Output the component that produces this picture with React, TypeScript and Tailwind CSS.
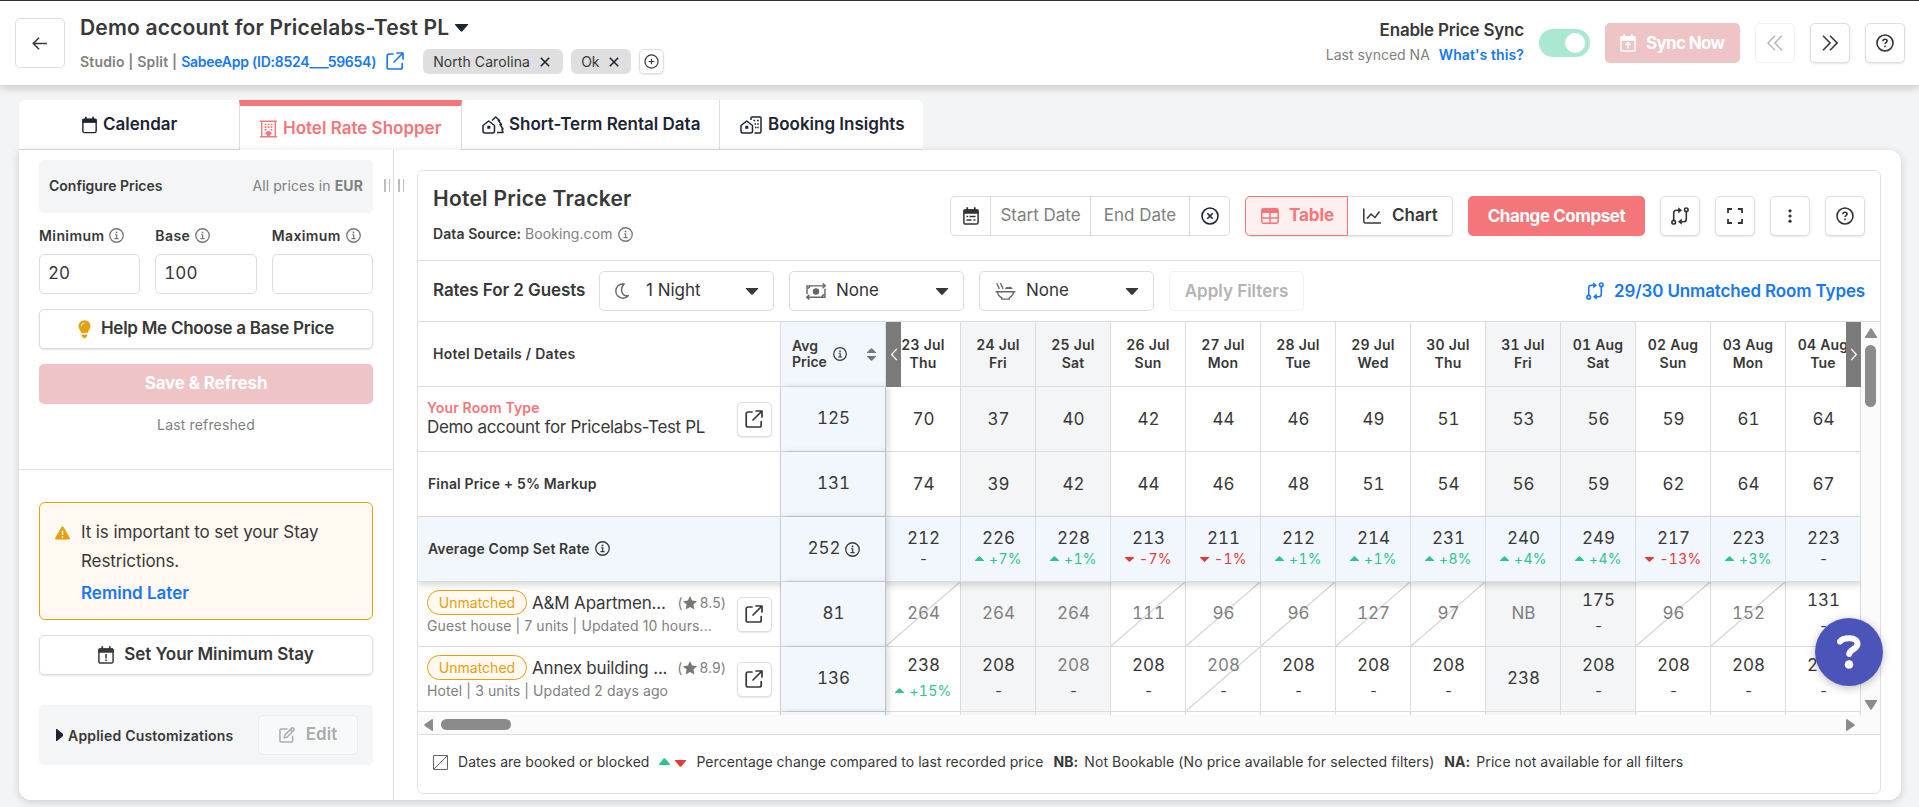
import type { ReactNode } from 'react';

type IconProps = { className?: string };

type Cell = {
  value: string;
  change?: string;
  muted?: boolean;
  booked?: boolean;
};

const dates = [
  { day: '23 Jul', week: 'Thu' },
  { day: '24 Jul', week: 'Fri', weekend: true },
  { day: '25 Jul', week: 'Sat', weekend: true },
  { day: '26 Jul', week: 'Sun' },
  { day: '27 Jul', week: 'Mon' },
  { day: '28 Jul', week: 'Tue' },
  { day: '29 Jul', week: 'Wed' },
  { day: '30 Jul', week: 'Thu' },
  { day: '31 Jul', week: 'Fri', weekend: true },
  { day: '01 Aug', week: 'Sat', weekend: true },
  { day: '02 Aug', week: 'Sun' },
  { day: '03 Aug', week: 'Mon' },
  { day: '04 Aug', week: 'Tue' },
];

const roomPrices = ['70', '37', '40', '42', '44', '46', '49', '51', '53', '56', '59', '61', '64'];
const finalPrices = ['74', '39', '42', '44', '46', '48', '51', '54', '56', '59', '62', '64', '67'];

const compSet: Cell[] = [
  { value: '212', change: '-' },
  { value: '226', change: '+7%' },
  { value: '228', change: '+1%' },
  { value: '213', change: '-7%' },
  { value: '211', change: '-1%' },
  { value: '212', change: '+1%' },
  { value: '214', change: '+1%' },
  { value: '231', change: '+8%' },
  { value: '240', change: '+4%' },
  { value: '249', change: '+4%' },
  { value: '217', change: '-13%' },
  { value: '223', change: '+3%' },
  { value: '223', change: '-' },
];

const hotels: { name: string; rating: string; info: string; avg: string; cells: Cell[] }[] = [
  {
    name: 'A&M Apartmen...',
    rating: '8.5',
    info: 'Guest house | 7 units | Updated 10 hours...',
    avg: '81',
    cells: [
      { value: '264', booked: true, muted: true },
      { value: '264', muted: true },
      { value: '264', muted: true },
      { value: '111', booked: true, muted: true },
      { value: '96', booked: true, muted: true },
      { value: '96', booked: true, muted: true },
      { value: '127', booked: true, muted: true },
      { value: '97', booked: true, muted: true },
      { value: 'NB', muted: true },
      { value: '175', change: '-' },
      { value: '96', booked: true, muted: true },
      { value: '152', booked: true, muted: true },
      { value: '131', change: '-' },
    ],
  },
  {
    name: 'Annex building ...',
    rating: '8.9',
    info: 'Hotel | 3 units | Updated 2 days ago',
    avg: '136',
    cells: [
      { value: '238', change: '+15%' },
      { value: '208', change: '-' },
      { value: '208', change: '-', muted: true },
      { value: '208', change: '-' },
      { value: '208', change: '-', booked: true, muted: true },
      { value: '208', change: '-' },
      { value: '208', change: '-' },
      { value: '208', change: '-' },
      { value: '238' },
      { value: '208', change: '-' },
      { value: '208', change: '-' },
      { value: '208', change: '-' },
      { value: '208', change: '-' },
    ],
  },
];

/* ---------- icons ---------- */

function InfoIcon({ className }: IconProps) {
  return (
    <svg viewBox="0 0 16 16" className={className} fill="none" stroke="currentColor">
      <circle cx="8" cy="8" r="7.2" strokeWidth="1.4" />
      <path d="M6.5 7.2h1.700v4M5.800 11.400h4.400" strokeWidth="1.300" />
      <circle cx="8" cy="4.700" r="1" fill="currentColor" stroke="none" />
    </svg>
  );
}

function HelpIcon({ className }: IconProps) {
  return (
    <svg viewBox="0 0 18 18" className={className} fill="none" stroke="currentColor" strokeWidth="1.6">
      <circle cx="9" cy="9" r="8" />
      <path d="M6.9 7.2c0-1.2 1-1.9 2.1-1.9s2.1.7 2.1 1.8c0 1.4-2.1 1.5-2.1 3" />
      <path d="M9 11.5v1.7" />
    </svg>
  );
}

function ExternalIcon({ className }: IconProps) {
  return (
    <svg viewBox="0 0 18 18" className={className} fill="none" stroke="currentColor" strokeWidth="1.7" strokeLinecap="round" strokeLinejoin="round">
      <path d="M7 2H3a1.8 1.8 0 0 0-1.8 1.8v11.4A1.8 1.8 0 0 0 3 17h11.4a1.8 1.8 0 0 0 1.8-1.8V11.500" />
      <path d="M11 1h6v6M16.500 1.500 8 10" />
    </svg>
  );
}

function CalendarIcon({ className, children }: IconProps & { children?: ReactNode }) {
  return (
    <svg viewBox="0 0 16 18" className={className} fill="none" stroke="currentColor">
      <rect x=".9" y="2.900" width="14.200" height="14.200" rx="1.700" strokeWidth="1.500" />
      <path d="M.9 2.900h14.200v3.300H.9z" fill="currentColor" />
      <path d="M4.200.3v3M11.800.3v3" strokeWidth="1.800" />
      {children}
    </svg>
  );
}

function HotelIcon({ className }: IconProps) {
  return (
    <svg viewBox="0 0 18 18" className={className} fill="none" stroke="currentColor">
      <path d="M0 .8h18M0 17.200h18M1.800 1v16M16.200 1v16" strokeWidth="1.500" />
      <path d="M4.800 4.200h2M8 4.200h2M11.200 4.200h2M4.800 7h2M8 7h2M11.200 7h2M4.800 9.800h2M11.200 9.800h2" strokeWidth="1.700" />
      <path d="M7.500 17v-2.300H5.500c0-2 1.500-3.500 3.500-3.500s3.500 1.500 3.500 3.500h-2V17z" fill="currentColor" stroke="none" />
    </svg>
  );
}

function RentalIcon({ className }: IconProps) {
  return (
    <svg viewBox="0 0 22 18" className={className} fill="none" stroke="currentColor" strokeWidth="1.500" strokeLinejoin="round">
      <path d="M1 9.500 6.700 5l5.800 4.500V15a2 2 0 0 1-2 2H3a2 2 0 0 1-2-2z" />
      <rect x="5.300" y="9.800" width="3" height="3" fill="currentColor" stroke="none" />
      <path d="M10 4.500 13.700 1l3.800 3.500h-1.200l3.200 4H18l3 4.500-1 .3 1 3.200h-6" />
    </svg>
  );
}

function InsightsIcon({ className }: IconProps) {
  return (
    <svg viewBox="0 0 22 18" className={className} fill="none" stroke="currentColor" strokeWidth="1.500" strokeLinejoin="round">
      <path d="M1 9.500 6.700 5l5.800 4.500V15a2 2 0 0 1-2 2H3a2 2 0 0 1-2-2z" />
      <rect x="5.300" y="9.800" width="3" height="3" fill="currentColor" stroke="none" />
      <path d="M11 4V2q0-1 1-1h8q1 0 1 1v13.500c0 1-.5 1.500-1.500 1.500H14.500" />
      <path d="M13.500 4.500h1.700M17 4.500h1.700M14.500 8h1.500M17.200 8h1.500M15 11.500h1.500M17.200 11.500h1.500" />
    </svg>
  );
}

function CompareIcon({ className }: IconProps) {
  return (
    <svg viewBox="0 0 18 18" className={className} fill="none" stroke="currentColor" strokeWidth="1.600">
      <circle cx="2.700" cy="15.200" r="1.800" />
      <circle cx="15.300" cy="2.800" r="1.800" />
      <path d="M2.700 13.200V6c0-1.800 1-2.700 2.600-2.700H8M15.300 4.800V12c0 1.800-1 2.700-2.600 2.700H10" />
      <path d="M7.200.2 11 3.300 7.200 6.400zM10.800 11.600 7 14.700l3.800 3.100z" fill="currentColor" stroke="none" />
    </svg>
  );
}

function MoneyIcon({ className }: IconProps) {
  return (
    <svg viewBox="0 0 22 18" className={className} fill="none" stroke="currentColor" strokeWidth="1.500">
      <path d="M1.500 12V3h19M18 .5 20.800 3 18 5.500M20.500 6v9h-19M4 12.500 1.200 15 4 17.500" />
      <circle cx="11" cy="9" r="3.400" fill="currentColor" stroke="none" />
      <path d="M2 5.500q2.500 0 2.500-2.500M20 12.500q-2.500 0-2.500 2.500" />
    </svg>
  );
}

function MealIcon({ className }: IconProps) {
  return (
    <svg viewBox="0 0 22 19" className={className} fill="none" stroke="currentColor" strokeWidth="1.400">
      <path d="M.5 10.300h21M2.500 10.500c.4 3 2 5 4.500 6v1.500h8v-1.500c2.500-1 4.100-3 4.500-6" />
      <path d="M2 1c0 3 2 3 2.300 6.500M6 1c0 3 2 3 2.300 6.500" />
      <path d="M10.500 7.500c.5-2 2-2.500 3.500-2 1.800-1 4 0 4.500 2z" fill="currentColor" stroke="none" />
    </svg>
  );
}

function Up({ className }: IconProps) {
  return (
    <svg viewBox="0 0 10 6" className={className} fill="currentColor" preserveAspectRatio="none">
      <path d="M.4 6a.4.4 0 0 1-.3-.8L4.300.5a1 1 0 0 1 1.400 0l4.200 4.700a.4.400 0 0 1-.3.8z" />
    </svg>
  );
}

function Down({ className }: IconProps) {
  return (
    <svg viewBox="0 0 10 6" className={className} fill="currentColor" preserveAspectRatio="none">
      <path d="M.4 0a.4.400 0 0 0-.3.800l4.200 4.700a1 1 0 0 0 1.400 0L9.900.8A.4.400 0 0 0 9.600 0z" />
    </svg>
  );
}

/* ---------- small parts ---------- */

function IconButton({ children, faded }: { children: ReactNode; faded?: boolean }) {
  return (
    <button
      className={`flex size-10 shrink-0 items-center justify-center rounded-[5px] border bg-white ${
        faded ? 'border-[#f0f0f0] text-[#b3b3b3]' : 'border-[#dedede] text-[#333] shadow-[0_1px_2px_rgba(0,0,0,0.1)]'
      }`}
    >
      {children}
    </button>
  );
}

function PriceField({ label, value }: { label: string; value: string }) {
  return (
    <div className="flex-1">
      <div className="flex h-[18px] items-center gap-[5px] pb-[1px] text-[14px] font-semibold tracking-[0.4px]">
        {label}
        <InfoIcon className="size-[15px] text-[#777]" />
      </div>
      <div className="mt-[9px] flex h-10 items-center rounded-[5px] border border-[#dcdcdc] px-2 text-[17px] tabular-nums">{value}</div>
    </div>
  );
}

function Select({ icon, label }: { icon: ReactNode; label: string }) {
  return (
    <div className="mr-[15px] flex h-10 w-[175px] items-center rounded-[5px] border border-[#dcdcdc] pr-[15px] pl-[15px]">
      <span className="flex w-[31px] items-center text-[#666]">{icon}</span>
      <span className="flex-1 text-[17px] text-[#333]">{label}</span>
      <Down className="h-[7px] w-3" />
    </div>
  );
}

function Change({ text }: { text: string }) {
  if (text === '-') return <span className="text-[14px] leading-[18px]">-</span>;
  const down = text.startsWith('-');
  return (
    <span className={`flex items-center gap-[5px] text-[14px] leading-[18px] tracking-[0.3px] ${down ? 'text-[#e53935]' : 'text-[#2dc48d]'}`}>
      {down ? <Down className="h-[5px] w-[9px]" /> : <Up className="mb-[2px] h-[5px] w-[9px]" />}
      {text}
    </span>
  );
}

function DateCell({ cell, weekend, tint, single }: { cell: Cell; weekend?: boolean; tint?: boolean; single?: boolean }) {
  const spacing = tint ? 'pb-[3px]' : single ? 'pb-[1px]' : cell.change ? 'pb-[4px]' : 'pb-[2px]';
  const gap = !cell.change ? '' : tint ? 'mb-[1px]' : 'mb-[6px]';
  return (
    <div
      className={`relative flex w-[75px] shrink-0 flex-col items-center justify-center border-r border-[#dcdcdc] pl-[1px] tabular-nums ${spacing} ${
        tint ? 'bg-[#f2f7fe]' : weekend ? 'bg-[#f3f5f7]' : 'bg-white'
      }`}
    >
      {cell.booked && (
        <svg viewBox="0 0 75 64" className="absolute inset-0 h-full w-full" preserveAspectRatio="none">
          <path d="M0 64 75 0" stroke="#d4d4d4" strokeWidth="1.300" />
        </svg>
      )}
      <span className={`relative text-[17px] leading-[22px] ${cell.muted ? 'text-[#808080]' : ''} ${gap}`}>{cell.value}</span>
      {cell.change && <Change text={cell.change} />}
    </div>
  );
}

type RowProps = { title: ReactNode; avg: string; cells: Cell[]; tint?: boolean; infoAvg?: boolean; single?: boolean };

function Row({ title, avg, cells, tint, infoAvg, single }: RowProps) {
  return (
    <div className={`flex h-[65px] shrink-0 border-b border-[#dcdcdc] ${tint ? 'relative z-10 bg-[#f2f7fe] shadow-[0_3px_7px_rgba(0,0,0,0.16)]' : ''}`}>
      <div className="flex w-[363px] shrink-0 items-center border-r border-[#d0d0d0]">{title}</div>
      <div className="relative z-10 flex w-[105px] shrink-0 items-center justify-center gap-1 border-r border-[#c0c0c0] bg-[#f2f7fe] pl-[1px] text-[17px] tabular-nums shadow-[3px_0_6px_rgba(0,0,0,0.13)]">
        {avg}
        {infoAvg && <InfoIcon className="size-[15px]" />}
      </div>
      {cells.map((cell, i) => (
        <DateCell key={i} cell={cell} weekend={dates[i].weekend} tint={tint} single={single} />
      ))}
    </div>
  );
}

function ExternalButton() {
  return (
    <button className="mr-2 flex size-[35px] shrink-0 items-center justify-center rounded-[5px] border border-[#dedede] bg-white pr-[2px] pb-[1px] shadow-[0_1px_2px_rgba(0,0,0,0.1)]">
      <ExternalIcon className="size-[18px]" />
    </button>
  );
}

/* ---------- sections ---------- */

function Header() {
  return (
    <header className="relative z-20 flex h-[85px] shrink-0 items-start border-t border-[#333] bg-white pr-[14px] pl-[15px] shadow-[0_3px_8px_rgba(0,0,0,0.18)]">
      <button className="mt-[17px] flex h-[50px] w-[50px] items-center justify-center rounded-[5px] border border-[#dedede] pr-[2px]">
        <svg viewBox="0 0 16 14" className="h-[13px] w-[15px]" fill="none" stroke="currentColor" strokeWidth="1.700">
          <path d="M16 7H1.500M7.500.8 1.300 7l6.200 6.200" />
        </svg>
      </button>
      <div className="ml-[15px]">
        <div className="mt-3 flex h-[30px] items-center gap-[6px] text-[21px] font-semibold tracking-[0.18px] whitespace-nowrap">
          Demo account for Pricelabs-Test PL
          <Down className="h-[8px] w-[13px] text-[#1d2433]" />
        </div>
        <div className="mt-[5px] flex h-[26px] items-center text-[14px] whitespace-nowrap">
          <span className="mr-1 font-semibold tracking-[0.18px] text-[#808080]">Studio | Split |</span>
          <span className="font-semibold tracking-[-0.26px] text-[#1877f2]">SabeeApp (ID:8524___59654)</span>
          <ExternalIcon className="mr-[19px] ml-[10px] size-[18px] text-[#1877f2]" />
          <span className="mr-2 flex h-[25px] w-[140px] items-center gap-[10px] rounded-[6px] bg-[#dfdfdf] pl-[10px] tracking-[0.08px]">
            North Carolina
            <Cross />
          </span>
          <span className="mr-2 flex h-[25px] w-[60px] items-center gap-[9px] rounded-[6px] bg-[#dfdfdf] pl-[10px]">
            Ok
            <Cross />
          </span>
          <span className="flex size-[25px] items-center justify-center rounded-[5px] border border-[#dedede] shadow-[0_1px_2px_rgba(0,0,0,0.1)]">
            <svg viewBox="0 0 16 16" className="size-[15px]" fill="none" stroke="currentColor" strokeWidth="1.300">
              <circle cx="8" cy="8" r="7" />
              <path d="M8 5v6M5 8h6" />
            </svg>
          </span>
        </div>
      </div>
      <div className="mt-[17px] ml-auto text-right">
        <div className="text-[17px] leading-6 font-semibold tracking-[-0.2px]">Enable Price Sync</div>
        <div className="mt-[3px] text-[14px] leading-5 text-[#808080]">
          Last synced NA <span className="ml-[5px] font-semibold tracking-[0.1px] text-[#1877f2]">What's this?</span>
        </div>
      </div>
      <div className="mt-[28px] ml-[15px] flex h-7 w-[51px] items-center justify-end rounded-full bg-[#abe8d1] pr-[5px]">
        <div className="size-5 rounded-full bg-white" />
      </div>
      <div className="mt-[22px] flex items-center gap-[15px] pl-[15px]">
        <button className="flex h-10 w-[135px] items-center gap-[10px] rounded-[5px] bg-[#efc4c6] pl-[15px] text-[17px] font-bold tracking-[-0.65px] text-white">
          <CalendarIcon className="h-[18px] w-4">
            <path d="M8 14.500V9M5.500 11 8 8.500 10.500 11" strokeWidth="1.500" />
          </CalendarIcon>
          <span className="pt-[2px]">Sync Now</span>
        </button>
        <IconButton faded>
          <svg viewBox="0 0 16 16" className="size-4" fill="none" stroke="currentColor" strokeWidth="1.400">
            <path d="M8 .8.900 8 8 15.200M15 .8 7.900 8 15 15.200" />
          </svg>
        </IconButton>
        <IconButton>
          <svg viewBox="0 0 16 16" className="size-4" fill="none" stroke="currentColor" strokeWidth="1.500">
            <path d="M1 .8 8.100 8 1 15.200M8 .8 15.100 8 8 15.200" />
          </svg>
        </IconButton>
        <IconButton>
          <HelpIcon className="size-[18px]" />
        </IconButton>
      </div>
    </header>
  );
}

function Cross() {
  return (
    <svg viewBox="0 0 10 10" className="mt-[2px] size-[10px]" fill="none" stroke="#1d2433" strokeWidth="1.600">
      <path d="m.8.800 8.400 8.400M9.200.8.800 9.200" />
    </svg>
  );
}

function Tabs() {
  const tab = 'flex h-[50px] items-center border-b border-[#dedede] bg-white';
  return (
    <nav className="mt-[15px] ml-[19px] flex h-[50px] shrink-0 text-[17px] font-semibold whitespace-nowrap text-[#1d2433]">
      <div className={`${tab} w-[220px] rounded-tl-[6px] pl-[63px]`}>
        <CalendarIcon className="mr-[6px] h-[18px] w-[15px]" />
        Calendar
      </div>
      <div className="flex h-[50px] w-[223px] items-center border-x border-t-[6px] border-x-[#dedede] border-t-[#f4767a] bg-white pt-[1px] pl-5 text-[#f4767a]">
        <HotelIcon className="mr-[6px] h-[18px] w-[17px]" />
        Hotel Rate Shopper
      </div>
      <div className={`${tab} w-[258px] border-r pl-[20px]`}>
        <RentalIcon className="mr-[5px] h-[18px] w-[22px]" />
        Short-Term Rental Data
      </div>
      <div className={`${tab} w-[203px] rounded-tr-[6px] pl-5`}>
        <InsightsIcon className="mr-[6px] h-[18px] w-[22px]" />
        Booking Insights
      </div>
    </nav>
  );
}

function Grip() {
  return (
    <span className="flex h-[13px] w-[6px] justify-between">
      <span className="w-[1.500px] bg-[#bdbdbd]" />
      <span className="w-[1.500px] bg-[#bdbdbd]" />
    </span>
  );
}

function Sidebar() {
  const button = 'flex h-10 items-center justify-center rounded-[5px] border border-[#dcdcdc] text-[17px] font-semibold shadow-[0_1px_2px_rgba(0,0,0,0.12)]';
  return (
    <aside className="relative flex w-[375px] shrink-0 flex-col border-r border-[#dcdcdc]">
      <div className="absolute top-[29px] -right-[11px] flex gap-2">
        <Grip />
        <Grip />
      </div>
      <div className="mx-5 mt-[10px] flex h-[53px] w-[334px] items-center justify-between rounded-[5px] bg-[#f3f5f7] px-[10px] pb-[2px] text-[14px]">
        <span className="font-semibold">Configure Prices</span>
        <span className="tracking-[0.1px] text-[#808080]">
          All prices in <b className="font-bold">EUR</b>
        </span>
      </div>
      <div className="mx-5 mt-[14px] flex w-[334px] gap-[15px]">
        <PriceField label="Minimum" value="20" />
        <PriceField label="Base" value="100" />
        <PriceField label="Maximum" value="" />
      </div>
      <div className={`${button} mx-5 mt-[15px] w-[334px] tracking-[-0.27px]`}>
        <svg viewBox="0 0 14 20" className="mr-[10px] h-[19px] w-[13px] text-[#e5a00d]" fill="currentColor">
          <path d="M7 0a6.500 6.500 0 0 1 6.500 6.500c0 2.800-2 4-2.800 6.500q-.2.800-1 .8H4.300q-.8 0-1-.8C2.500 10.500.500 9.300.500 6.500A6.500 6.500 0 0 1 7 0M4 15.500h6V17L8 19.500H6L4 17z" />
          <path d="M3.500 6.500A3.500 3.500 0 0 1 7 3" fill="none" stroke="#fff" />
        </svg>
        Help Me Choose a Base Price
      </div>
      <div className="mx-5 mt-[15px] flex h-10 w-[334px] items-center justify-center rounded-[5px] bg-[#efc4c6] text-[17px] font-bold tracking-[-0.15px] text-white">
        Save &amp; Refresh
      </div>
      <div className="mx-5 mt-[11px] w-[334px] text-center text-[14px] leading-5 tracking-[0.15px] text-[#808080]">Last refreshed</div>
      <div className="mt-[34px] border-t border-[#e4e4e4]" />
      <div className="mx-5 mt-8 flex h-[118px] w-[334px] rounded-[6px] border border-[#e5a00d] bg-[#fff9f2] pt-[15px] pl-[15px] text-[17px]">
        <svg viewBox="0 0 16 14" className="mt-2 mr-[11px] h-[14px] w-[15px]">
          <path d="M8 0q.7 0 1.100.7l6.700 11.600q.3 1.400-1 1.700H1.200Q-.2 13.700.2 12.300L6.900.7Q7.300 0 8 0" fill="#e5a00d" />
          <path d="M8 4.500V9M8 10.500v1.600" stroke="#fff" strokeWidth="1.600" />
        </svg>
        <div>
          <p className="leading-[29px] tracking-[-0.1px]">
            It is important to set your Stay
            <br />
            Restrictions.
          </p>
          <p className="mt-[3px] leading-[29px] font-semibold text-[#1877f2]">Remind Later</p>
        </div>
      </div>
      <div className={`${button} mx-5 mt-[15px] w-[334px] tracking-[-0.05px]`}>
        <CalendarIcon className="mr-[10px] h-[18px] w-4">
          <path d="M8 8v4.500M8 13.500v1.500" strokeWidth="1.500" />
        </CalendarIcon>
        Set Your Minimum Stay
      </div>
      <div className="mx-5 mt-[30px] flex h-[60px] w-[334px] items-center rounded-[5px] bg-[#f3f5f7] pl-[17px] text-[14px] font-semibold tracking-[0.2px]">
        <svg viewBox="0 0 7 12" className="mr-[5px] h-3 w-[7px]" fill="#1d2433">
          <path d="M0 0h1l6 5v2l-6 5H0z" />
        </svg>
        Applied Customizations
        <span className="mr-[15px] ml-auto flex h-10 w-[100px] items-center justify-center gap-[11px] rounded-[5px] border border-[#ececec] bg-[#f8f9fb] text-[17px] tracking-normal text-[#ababab]">
          <svg viewBox="0 0 17 17" className="size-4" fill="none" stroke="currentColor" strokeWidth="1.600" strokeLinejoin="round">
            <path d="M9 2H2.500Q1 2 1 3.500v11Q1 16 2.500 16h10.500q1.500 0 1.500-1.500V9" />
            <path d="M5.500 11.500 6.200 8.500 13.500 1.200q1-.8 2 .2t.2 2L8.500 10.800zM12 2.700l2.300 2.300" />
          </svg>
          Edit
        </span>
      </div>
    </aside>
  );
}

function TrackerHeader() {
  return (
    <div className="flex h-[90px] shrink-0 items-start border-b border-[#dcdcdc] pr-[15px] pl-[15px]">
      <div>
        <h2 className="mt-[14px] text-[21px] leading-7 font-semibold tracking-[0.26px]">Hotel Price Tracker</h2>
        <div className="mt-[11px] flex items-center text-[14px] leading-5 tracking-[0.08px]">
          <b className="mr-1 font-semibold">Data Source:</b>
          <span className="text-[#808080]">Booking.com</span>
          <InfoIcon className="ml-[5px] size-[15px] text-[#777]" />
        </div>
      </div>
      <div className="mt-[25px] ml-auto flex h-10 w-[280px] rounded-[5px] border border-[#dcdcdc] text-[17px] text-[#808080]">
        <span className="flex w-10 items-center justify-center border-r border-[#dcdcdc] text-[#333]">
          <CalendarIcon className="h-[18px] w-4">
            <path d="M3.500 9.500h1.700M6.500 9.500h6M3.500 13h5M10.500 13h2" strokeWidth="1.500" />
          </CalendarIcon>
        </span>
        <span className="flex w-[100px] items-center justify-center border-r border-[#dcdcdc]">Start Date</span>
        <span className="flex w-[99px] items-center justify-center border-r border-[#dcdcdc]">End Date</span>
        <span className="flex flex-1 items-center justify-center text-[#1d2433]">
          <svg viewBox="0 0 18 18" className="size-[18px]" fill="none" stroke="currentColor" strokeWidth="1.600">
            <circle cx="9" cy="9" r="8" />
            <path d="m6.300 6.300 5.400 5.400M11.700 6.300l-5.400 5.400" />
          </svg>
        </span>
      </div>
      <div className="mt-[25px] ml-[15px] flex rounded-[5px] text-[17px] shadow-[0_1px_2px_rgba(0,0,0,0.1)]">
        <span className="flex h-10 w-[103px] items-center gap-[10px] rounded-l-[5px] border border-[#f4767a] bg-[#fdf0f0] pl-[15px] font-bold tracking-[-0.1px] text-[#f4767a]">
          <svg viewBox="0 0 18 16" className="h-4 w-[18px]" fill="none" stroke="currentColor" strokeWidth="1.500">
            <rect x=".8" y=".8" width="16.400" height="14.400" rx="1.700" />
            <path d="M1 1h16v4H1z" fill="currentColor" stroke="none" />
            <path d="M1 10h16M9 4v11" />
          </svg>
          Table
        </span>
        <span className="flex h-10 w-[105px] items-center gap-[11px] rounded-r-[5px] border border-l-0 border-[#dcdcdc] pl-[15px] font-semibold">
          <svg viewBox="0 0 18 16" className="h-4 w-[18px]" fill="none" stroke="currentColor" strokeWidth="1.500">
            <path d="M.8.500v13q0 1.500 1.500 1.500H18M4 10.500l4-4.500 4 3.500 4.500-6" />
          </svg>
          Chart
        </span>
      </div>
      <button className="mt-[25px] ml-[15px] h-10 w-[177px] rounded-[5px] bg-[#f4767a] pt-[1px] text-[17px] font-bold tracking-[-0.43px] text-white">
        Change Compset
      </button>
      <div className="mt-[25px] ml-[15px] flex gap-[15px]">
        <IconButton>
          <CompareIcon className="size-[18px]" />
        </IconButton>
        <IconButton>
          <svg viewBox="0 0 16 16" className="size-4" fill="none" stroke="currentColor" strokeWidth="1.800">
            <path d="M1 5V1h4M11 1h4v4M15 11v4h-4M5 15H1v-4" />
          </svg>
        </IconButton>
        <IconButton>
          <svg viewBox="0 0 4 14" className="h-[14px] w-1" fill="currentColor">
            <circle cx="2" cy="1.800" r="1.600" />
            <circle cx="2" cy="7" r="1.600" />
            <circle cx="2" cy="12.200" r="1.600" />
          </svg>
        </IconButton>
        <IconButton>
          <HelpIcon className="size-[18px]" />
        </IconButton>
      </div>
    </div>
  );
}

function Filters() {
  return (
    <div className="flex h-[61px] shrink-0 items-center border-b border-[#dcdcdc] pr-[15px] pl-[15px]">
      <span className="w-[166px] text-[17px] font-semibold tracking-[-0.08px] whitespace-nowrap">Rates For 2 Guests</span>
      <Select
        label="1 Night"
        icon={
          <svg viewBox="0 0 14 16" className="h-4 w-[14px]" fill="none" stroke="currentColor" strokeWidth="1.400">
            <path d="M9 1C4 .5.800 4 .8 8s3.200 7.200 7.200 7.200c2.200 0 4-.8 5.200-2.400C7.500 13.500 4 7 9 1z" />
          </svg>
        }
      />
      <Select label="None" icon={<MoneyIcon className="h-[17px] w-[22px]" />} />
      <Select label="None" icon={<MealIcon className="h-[18px] w-[21px]" />} />
      <span className="flex h-10 w-[135px] items-center justify-center rounded-[5px] border border-[#f0f0f0] pt-[2px] text-[17px] font-semibold text-[#b3b3b3]">
        Apply Filters
      </span>
      <span className="ml-auto flex items-center gap-[10px] text-[17px] font-semibold tracking-[-0.14px] text-[#1877f2]">
        <CompareIcon className="size-[18px]" />
        <span className="pt-[2px]">29/30 Unmatched Room Types</span>
      </span>
    </div>
  );
}

function RateTable() {
  return (
    <div className="flex h-[393px] shrink-0">
      <div className="relative flex w-[1443px] shrink-0 flex-col overflow-hidden">
        <div className="flex h-[65px] shrink-0 border-b border-[#dcdcdc] text-[14px] font-semibold">
          <div className="flex w-[363px] shrink-0 items-center border-r border-[#dcdcdc] pb-[1px] pl-[15px] tracking-[0.26px]">Hotel Details / Dates</div>
          <div className="flex w-[105px] shrink-0 items-center border-r border-[#dcdcdc] bg-[#f2f7fe] pl-[11px]">
            <span className="w-[41px] leading-4">
              Avg
              <br />
              Price
            </span>
            <InfoIcon className="size-[14px]" />
            <span className="ml-5 flex flex-col gap-[3px] text-[#777]">
              <Up className="h-[5px] w-[9px]" />
              <Down className="h-[5px] w-[9px]" />
            </span>
          </div>
          {dates.map((d) => (
            <div
              key={d.day}
              className={`flex w-[75px] shrink-0 flex-col items-center justify-center border-r border-[#dcdcdc] pb-[1px] leading-[18px] tracking-[0.2px] tabular-nums ${
                d.weekend ? 'bg-[#f3f5f7]' : ''
              }`}
            >
              <span>{d.day}</span>
              <span>{d.week}</span>
            </div>
          ))}
        </div>
        <div className="absolute top-0 left-[468px] z-20 flex h-[65px] w-[15px] items-center justify-center bg-[#7b7b7b]">
          <svg viewBox="0 0 8 14" className="h-[13px] w-2" fill="none" stroke="#fff" strokeWidth="1.400">
            <path d="M7 1 1.500 7 7 13" />
          </svg>
        </div>
        <div className="absolute top-0 right-0 z-20 flex h-[65px] w-[15px] items-center justify-center bg-[#7b7b7b]">
          <svg viewBox="0 0 8 14" className="h-[13px] w-2" fill="none" stroke="#fff" strokeWidth="1.400">
            <path d="m1 1 5.500 6L1 13" />
          </svg>
        </div>
        <Row
          avg="125"
          single
          cells={roomPrices.map((value) => ({ value }))}
          title={
            <>
              <div className="flex-1 pb-[2px] pl-[9px] whitespace-nowrap">
                <div className="text-[14px] leading-[18px] font-semibold tracking-[0.15px] text-[#f4767a]">Your Room Type</div>
                <div className="text-[17px] leading-5 tracking-[-0.32px]">Demo account for Pricelabs-Test PL</div>
              </div>
              <ExternalButton />
            </>
          }
        />
        <Row
          avg="131"
          single
          cells={finalPrices.map((value) => ({ value }))}
          title={<b className="pb-[1px] pl-[10px] text-[14px] font-semibold tracking-[0.14px]">Final Price + 5% Markup</b>}
        />
        <Row
          avg="252"
          infoAvg
          tint
          cells={compSet}
          title={
            <span className="flex items-center gap-[5px] pb-[1px] pl-[10px] text-[14px] font-semibold tracking-[0.12px]">
              Average Comp Set Rate
              <InfoIcon className="size-[15px]" />
            </span>
          }
        />
        {hotels.map((h) => (
          <Row
            key={h.name}
            avg={h.avg}
            cells={h.cells}
            title={
              <>
                <div className="flex-1 pb-[2px] pl-[9px] whitespace-nowrap">
                  <div className="flex w-[299px] items-center">
                    <span className="mr-[5px] flex h-[25px] w-[100px] items-center justify-center rounded-full border border-[#e5a00d] bg-[#fff9f2] text-[14px] text-[#e5a00d]">
                      Unmatched
                    </span>
                    <span className="text-[17px] leading-6 tracking-[-0.18px]">{h.name}</span>
                    <span className="ml-auto flex items-center text-[14px] tracking-[0.1px] text-[#808080]">
                      (
                      <svg viewBox="0 0 24 24" className="mr-[3px] size-[14px]" fill="#777">
                        <path d="m12 0 3.600 7.800 8.400 1-6.200 5.800 1.700 8.400L12 18.800 4.500 23l1.700-8.400L0 8.800l8.400-1z" />
                      </svg>
                      {h.rating})
                    </span>
                  </div>
                  <div className="text-[14px] leading-[21px] tracking-[0.1px] text-[#808080]">{h.info}</div>
                </div>
                <ExternalButton />
              </>
            }
          />
        ))}
        <Row avg="" title="" cells={dates.map(() => ({ value: '' }))} />
      </div>
      <div className="flex w-[19px] flex-col items-center bg-[#fbfbfb] pt-[6px] pb-[5px] text-[#8b8b8b]">
        <Up className="h-[10px] w-3" />
        <div className="mt-[7px] h-[62px] w-[11px] rounded-full bg-[#8b8b8b]" />
        <Down className="mt-auto h-[10px] w-3" />
      </div>
    </div>
  );
}

function HorizontalScroll() {
  return (
    <div className="flex h-5 shrink-0 items-center border-b border-[#dcdcdc] bg-[#fbfbfb] pr-[25px] pl-[6px] text-[#8b8b8b]">
      <svg viewBox="0 0 9 12" className="h-3 w-[9px]" fill="currentColor">
        <path d="M9 .8v10.400q0 .8-.8.800L.500 6.800Q0 6 .500 5.200L8.200 0q.8 0 .8.800" />
      </svg>
      <div className="ml-2 h-[11px] w-[70px] rounded-full bg-[#8b8b8b]" />
      <svg viewBox="0 0 9 12" className="ml-auto h-3 w-[9px]" fill="currentColor">
        <path d="M0 .8v10.400q0 .8.800.8L8.500 6.800Q9 6 8.500 5.200L.8 0Q0 0 0 .8" />
      </svg>
    </div>
  );
}

function Legend() {
  return (
    <div className="flex flex-1 items-center pb-[5px] pl-[15px] text-[14px] tracking-[0.04px] whitespace-nowrap">
      <svg viewBox="0 0 15 15" className="mt-[1px] mr-[10px] size-[15px]" fill="none" stroke="#666">
        <path d="M.5.500h14v14H.500zM1 14 14 1" />
      </svg>
      Dates are booked or blocked
      <Up className="mr-[5px] ml-[10px] h-[7px] w-[11px] text-[#2dc48d]" />
      <Down className="mt-[3px] mr-[10px] h-[7px] w-[11px] text-[#e53935]" />
      Percentage change compared to last recorded price
      <b className="mr-[6px] ml-[10px]">NB:</b>
      <span className="tracking-[0.08px]">Not Bookable (No price available for selected filters)</span>
      <b className="mr-[6px] ml-[10px]">NA:</b>
      <span className="tracking-[0.1px]">Price not available for all filters</span>
    </div>
  );
}

export default function App() {
  return (
    <div className="relative flex h-[807px] w-full flex-col overflow-hidden bg-[#f2f4f6] font-['Inter',sans-serif] text-[#383838]">
      <Header />
      <Tabs />
      <main className="ml-[19px] flex h-[650px] w-[1882px] shrink-0 rounded-[12px] rounded-tl-none bg-white shadow-[0_2px_8px_rgba(0,0,0,0.16)]">
        <Sidebar />
        <section className="mt-5 ml-[23px] flex h-[624px] w-[1464px] flex-col overflow-hidden rounded-[6px] border border-[#e2e2e2]">
          <TrackerHeader />
          <Filters />
          <RateTable />
          <HorizontalScroll />
          <Legend />
        </section>
      </main>
      <button className="absolute top-[618px] left-[1815px] z-30 flex size-[68px] items-center justify-center rounded-full bg-[#4b54b9] shadow-[0_2px_8px_rgba(0,0,0,0.25)]">
        <svg viewBox="0 0 24 34" className="h-[34px] w-6" fill="none" stroke="#fff" strokeWidth="6" strokeLinecap="round">
          <path d="M3 6.500C6 2.500 20.500 1 20.500 9c0 5-7.500 5-8.300 10" />
          <circle cx="12" cy="29.500" r="4.300" fill="#fff" stroke="none" />
        </svg>
      </button>
    </div>
  );
}
